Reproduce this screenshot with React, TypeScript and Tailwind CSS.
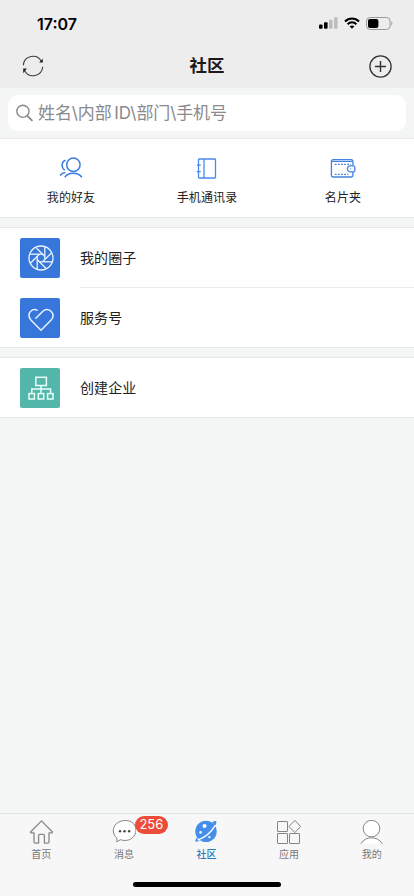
import type { ReactNode } from "react";
import clsx from "clsx";

interface ShortcutProps {
  icon: ReactNode;
  label: string;
}

interface TabItem {
  label: string;
  icon: ReactNode;
  active?: boolean;
  badge?: number;
}

function StatusBar() {
  return (
    <div className="flex h-11 items-center justify-between pl-[37px] pr-[21px] pt-[2px]">
      <span className="pt-[1px] font-[Inter,sans-serif] text-[16px] font-semibold text-black">
        17:07
      </span>
      <div className="flex items-center">
        <svg width="19" height="12" viewBox="0 0 19 12">
          <rect x="0" y="7.4" width="3.6" height="4.4" rx="1" fill="#000" />
          <rect x="5" y="5.2" width="3.6" height="6.6" rx="1" fill="#000" />
          <rect x="10" y="2.8" width="3.6" height="9" rx="1" fill="#bdbdbd" />
          <rect x="15" y="0.2" width="3.6" height="11.6" rx="1" fill="#bdbdbd" />
        </svg>
        <svg className="ml-[6px]" width="16" height="12" viewBox="0 0 16 12" fill="none">
          <path d="M1 4.4C5 .5 11 .5 15 4.4" stroke="#000" strokeWidth="2.1" />
          <path d="M3.6 7.2C6.2 4.8 9.8 4.8 12.4 7.2" stroke="#000" strokeWidth="2.1" />
          <path d="M5.6 9.3C7 8.1 9 8.1 10.4 9.3L8 11.8z" fill="#000" />
        </svg>
        <svg className="ml-[6px]" width="27" height="13" viewBox="0 0 27 13" fill="none">
          <rect x="0.5" y="0.5" width="23.6" height="12" rx="3.6" stroke="#999" />
          <rect x="2" y="2" width="10.4" height="9" rx="2" fill="#000" />
          <path d="M25.4 4.6v4c1.4-.6 1.4-3.4 0-4z" fill="#999" />
        </svg>
      </div>
    </div>
  );
}

function Header() {
  return (
    <div className="flex h-11 items-center justify-between px-[22px]">
      <button aria-label="刷新">
        <svg width="22" height="22" viewBox="0 0 22 22" fill="none" stroke="#3a3a3a">
          <path d="M1.3 10.2A9.7 9.7 0 0 1 19.4 6.2" strokeWidth="1.1" />
          <path d="M20.7 11.8A9.7 9.7 0 0 1 2.6 15.8" strokeWidth="1.1" />
          <path d="M20.8 3.8v3.6h-3.7z" fill="#222" stroke="none" />
          <path d="M1.2 18.2v-4.6h3.7z" fill="#222" stroke="none" />
        </svg>
      </button>
      <h1 className="pl-[1px] pt-[1px] text-[17.5px] font-bold text-[#1b1b1b]">社区</h1>
      <button aria-label="添加">
        <svg width="23" height="23" viewBox="0 0 23 23" fill="none" stroke="#333">
          <circle cx="11.5" cy="11.5" r="10.6" strokeWidth="1.3" />
          <path d="M11.5 6v11M6 11.5h11" strokeWidth="1.4" />
        </svg>
      </button>
    </div>
  );
}

function SearchBar() {
  return (
    <div className="h-[50px] px-2 pt-[7px]">
      <div className="flex h-9 items-center rounded-[10px] bg-white pl-2 text-[#8a8a8d]">
        <svg width="17" height="18" viewBox="0 0 17 18" fill="none" stroke="currentColor">
          <circle cx="6.9" cy="7.3" r="6.1" strokeWidth="1.4" />
          <path d="M11.3 11.8l4.6 4.6" strokeWidth="1.8" strokeLinecap="round" />
        </svg>
        <span className="ml-[5px] whitespace-nowrap pt-[1px] text-[17px] tracking-[-0.1px] [word-spacing:-2px]">
          姓名\内部 ID\部门\手机号
        </span>
      </div>
    </div>
  );
}

function FriendsIcon() {
  return (
    <svg width="24" height="24" viewBox="0 0 24 24" fill="none" stroke="#3c7ddd" strokeWidth="1.5">
      <circle cx="14.4" cy="8.7" r="6.7" />
      <path d="M5.8 21.2C9.5 16 19 16 22.8 21.2" />
      <path d="M6.6 4.1C2.2 5.4 2 11.6 5.8 14.2" />
      <path d="M1.2 19.5C2.2 17.9 4 16.8 6.4 16.5" />
    </svg>
  );
}

function ContactsIcon() {
  return (
    <svg width="24" height="24" viewBox="0 0 24 24" fill="none" stroke="#4a8ae6" strokeWidth="1.3">
      <rect x="3.5" y="3" width="17" height="19" rx="0.8" />
      <path d="M9 3v19M1.8 9.2h4M1.8 15.6h4" />
    </svg>
  );
}

function WalletIcon() {
  return (
    <svg width="26" height="24" viewBox="0 0 26 24" fill="none" stroke="#4583e0" strokeWidth="1.3">
      <path d="M22.9 9.6V5.5q0-1.9-1.9-1.9H3.3Q1.4 3.6 1.4 5.5v13.6q0 1.9 1.9 1.9H21q1.9 0 1.9-1.9v-3.2" />
      <path d="M1.8 5.4h20.6" strokeWidth="1.2" />
      <path d="M4.8 8.3h16M4.8 18.3h13.6" strokeWidth="1.3" strokeDasharray="1.8 1.3" />
      <path d="M23.6 9.8h-3.2a3 3 0 0 0 0 6h3.2q1.2 0 1.2-1.2v-3.6q0-1.2-1.2-1.2z" fill="#fff" />
      <circle cx="20.8" cy="12.8" r="0.6" fill="#4583e0" stroke="none" />
    </svg>
  );
}

function Shortcut({ icon, label }: ShortcutProps) {
  return (
    <button className="flex flex-1 flex-col items-center pt-[17px]">
      {icon}
      <span className="mt-[9px] text-[12px] leading-[18px] tracking-[0.1px] text-[#222]">
        {label}
      </span>
    </button>
  );
}

function ApertureIcon() {
  return (
    <svg width="26" height="26" viewBox="0 0 26 26" fill="none" stroke="#eaf3ff" strokeWidth="1.3">
      <circle cx="13" cy="13" r="12" />
      {[0, 45, 90, 135, 180, 225, 270, 315].map((angle) => (
        <path key={angle} d="M9.2 11.4V24.3" transform={`rotate(${angle} 13 13)`} />
      ))}
    </svg>
  );
}

function HeartIcon() {
  return (
    <svg className="mt-1" width="26" height="26" viewBox="0 0 26 26" fill="none" stroke="#eaf3ff" strokeWidth="1.5" strokeLinecap="round">
      <path d="M7.8 11.2L13.8 5.2C17 1.6 21.4 2 23.6 4.9c2.1 2.8 1.6 6-.5 8.2L13 23.2 2.9 13.1C.2 10 .5 6.3 2.7 4.3c2.1-2 4.4-2 6.4-1.2" />
    </svg>
  );
}

function OrgIcon() {
  return (
    <svg width="26" height="26" viewBox="0 0 26 26" fill="none" stroke="#e8fffa" strokeWidth="1.5">
      <rect x="7.8" y="2.3" width="10.6" height="8.2" />
      <path d="M13 10.5v8M3.8 18.5v-4.6h18.8v4.6" />
      <rect x="1" y="18.6" width="5.4" height="5.4" />
      <rect x="10.3" y="18.6" width="5.4" height="5.4" />
      <rect x="19.6" y="18.6" width="5.4" height="5.4" />
    </svg>
  );
}

function ListRow({
  icon,
  label,
  color = "bg-[#3777db]",
  divider = false,
}: ShortcutProps & { color?: string; divider?: boolean }) {
  return (
    <div className="flex items-stretch pl-5">
      <div className="flex items-center">
        <div className={clsx("flex h-10 w-10 items-center justify-center rounded-[2px] pl-[1px]", color)}>
          {icon}
        </div>
      </div>
      <div
        className={clsx(
          "ml-5 flex flex-1 items-center text-[14px] tracking-[0.1px] text-[#222]",
          divider ? "h-[60px] border-b border-[#e9ecec]" : "h-[59px]",
        )}
      >
        {label}
      </div>
    </div>
  );
}

const tabs: TabItem[] = [
  {
    label: "首页",
    icon: (
      <svg width="24" height="24" viewBox="-0.5 0 24 24" fill="none" stroke="#888" strokeWidth="1.3" strokeLinejoin="round">
        <path d="M12 .9L1.1 12q-.4.9.7.9h2.7v8.8q0 1.4 1.4 1.4h3.2v-7.6q0-1.2 1.2-1.2h3.4q1.2 0 1.2 1.2v7.6h3.2q1.4 0 1.4-1.4v-8.8h2.7q1.1 0 .7-.9z" />
      </svg>
    ),
  },
  {
    label: "消息",
    badge: 256,
    icon: (
      <svg width="24" height="24" viewBox="-0.5 0 24 24" fill="none" stroke="#777" strokeWidth="0.9">
        <path d="M4.4 21.8V18.1C-1 13.6-.2 5.7 5.8 2.3 11.8-1 19.7 0 22.6 6c2.6 5.8-.9 12.3-6.7 14-2.9.8-5.8.5-8-.3z" fill="#fff" />
        <g fill="#444" stroke="none">
          <circle cx="7.5" cy="11.3" r="1.2" />
          <circle cx="12" cy="11.3" r="1.2" />
          <circle cx="16.6" cy="11.3" r="1.2" />
        </g>
      </svg>
    ),
  },
  {
    label: "社区",
    active: true,
    icon: (
      <svg width="24" height="24" viewBox="0 0 24 24" fill="none">
        <circle cx="12" cy="11.4" r="10.7" fill="#458ee9" />
        <path d="M18.2 2.1Q21.1.6 22.1 1.3T21 6z" fill="#458ee9" />
        <path d="M2.7 17.7Q.7 20.7 1.6 21.6q1 .8 4-1.1z" fill="#458ee9" />
        <path d="M21.3 5.3C17.4 11.8 10.9 17.6 3.5 20.2" stroke="#fff" strokeWidth="1.4" />
        <g fill="#fff">
          <circle cx="10.5" cy="6.1" r="2" />
          <circle cx="6.6" cy="12.4" r="1.3" />
          <circle cx="15.4" cy="17.2" r="1.1" />
        </g>
      </svg>
    ),
  },
  {
    label: "应用",
    icon: (
      <svg width="24" height="24" viewBox="0 0 24 24" fill="none" stroke="#777" strokeWidth="0.9">
        <rect x="0.5" y="1.5" width="10" height="10" rx="0.5" />
        <rect x="0.5" y="13.5" width="10" height="10" rx="0.5" />
        <rect x="12.5" y="13.5" width="10" height="10" rx="0.5" />
        <path d="M17.8.4l5.9 6.1-5.9 6.1L12 6.5z" />
      </svg>
    ),
  },
  {
    label: "我的",
    icon: (
      <svg width="24" height="24" viewBox="0 0 24 24" fill="none" stroke="#777" strokeWidth="0.9">
        <path d="M1 23.7C5.2 15.8 17.8 15.8 22.2 23.7" fill="#fff" />
        <circle cx="11.5" cy="8.6" r="8.3" fill="#fff" />
      </svg>
    ),
  },
];

function TabBar() {
  return (
    <nav className="flex h-[83px] flex-col border-t border-[#dfe4e4] bg-[#f7f7f7]">
      <div className="flex pr-[1px]">
        {tabs.map((tab) => (
          <button key={tab.label} className="flex flex-1 flex-col items-center pt-[6px]">
            <div className="relative">
              {tab.icon}
              {tab.badge && (
                <span className="absolute -top-[4px] left-[23px] flex h-[18px] w-[33px] items-center justify-center rounded-full bg-[#eb4d3a] font-[Inter,sans-serif] text-[13px] text-white">
                  {tab.badge}
                </span>
              )}
            </div>
            <span
              className={clsx(
                "mt-[2px] text-[10px] leading-[16px]",
                tab.active ? "font-medium text-[#2878bd]" : "text-[#777]",
              )}
            >
              {tab.label}
            </span>
          </button>
        ))}
      </div>
      <div className="mx-auto mb-[9px] mt-auto h-[5px] w-[148px] rounded-full bg-black" />
    </nav>
  );
}

export default function App() {
  return (
    <div className="flex h-screen w-full flex-col bg-[#f4f6f6] font-[Inter,'Noto_Sans_CJK_SC',sans-serif]">
      <header className="bg-[#ededed]">
        <StatusBar />
        <Header />
      </header>

      <main className="flex-1">
        <SearchBar />

        <section className="flex h-20 border-y border-[#e6e9e9] bg-white px-[3px]">
          <Shortcut icon={<FriendsIcon />} label="我的好友" />
          <Shortcut icon={<ContactsIcon />} label="手机通讯录" />
          <Shortcut icon={<WalletIcon />} label="名片夹" />
        </section>

        <section className="mt-[9px] border-y border-[#e6e9e9] bg-white">
          <ListRow icon={<ApertureIcon />} label="我的圈子" divider />
          <ListRow icon={<HeartIcon />} label="服务号" />
        </section>

        <section className="mt-[9px] border-y border-[#e6e9e9] bg-white">
          <ListRow icon={<OrgIcon />} label="创建企业" color="bg-[#52b7aa]" />
        </section>
      </main>

      <TabBar />
    </div>
  );
}
